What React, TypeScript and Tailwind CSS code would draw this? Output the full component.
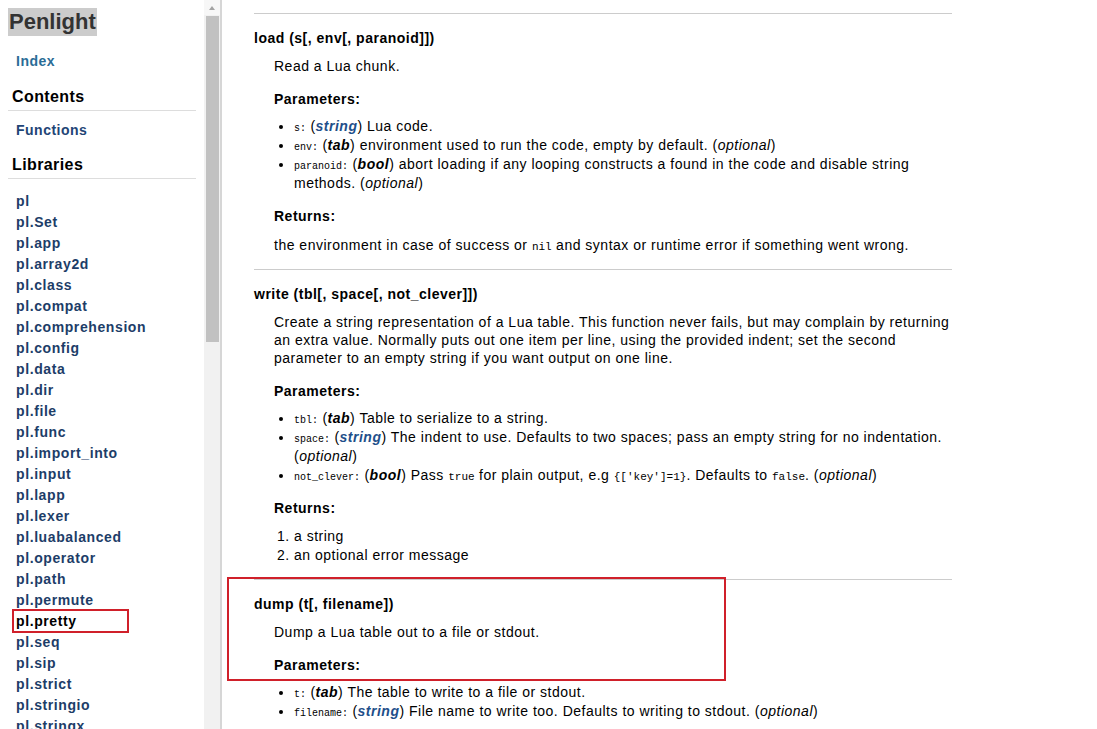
const libs = [
  "pl",
  "pl.Set",
  "pl.app",
  "pl.array2d",
  "pl.class",
  "pl.compat",
  "pl.comprehension",
  "pl.config",
  "pl.data",
  "pl.dir",
  "pl.file",
  "pl.func",
  "pl.import_into",
  "pl.input",
  "pl.lapp",
  "pl.lexer",
  "pl.luabalanced",
  "pl.operator",
  "pl.path",
  "pl.permute",
  "pl.pretty",
  "pl.seq",
  "pl.sip",
  "pl.strict",
  "pl.stringio",
  "pl.stringx",
];

const Code = ({ children }: { children: React.ReactNode }) => (
  <code className="font-['Liberation_Mono',monospace] text-[10px] leading-none tracking-normal">
    {children}
  </code>
);

const Inline = ({ children }: { children: React.ReactNode }) => (
  <code className="font-['Liberation_Mono',monospace] text-[11px] leading-none tracking-normal">
    {children}
  </code>
);

const Type = ({ name, link }: { name: string; link?: boolean }) => (
  <>
    (
    <span
      className={
        "font-bold italic " + (link ? "text-[#1e4f8a]" : "text-black")
      }
    >
      {name}
    </span>
    )
  </>
);

const Opt = () => (
  <>
    (<em>optional</em>)
  </>
);

const Sidebar = () => (
  <nav className="w-[204px] shrink-0 bg-white relative">
    <h1 className="ml-[8px] mt-[8px] inline-block h-[28px] leading-[28px] px-[1px] bg-[#cccccc] text-[#333] text-[22px] font-bold">
      Penlight
    </h1>
    <div className="mt-[15px] pl-[16px] leading-[21px] text-[14px] font-bold tracking-[0.5px] text-[#2a6c96]">
      Index
    </div>
    <h2 className="mt-[15px] mx-[8px] pl-[4px] pb-[3px] leading-[20px] text-[16px] font-bold tracking-[0.4px] text-black border-b border-[#dddddd]">
      Contents
    </h2>
    <div className="mt-[9px] pl-[16px] leading-[21px] text-[14px] font-bold tracking-[0.5px] text-[#1f4576]">
      Functions
    </div>
    <h2 className="mt-[14px] mx-[8px] pl-[4px] pb-[3px] leading-[20px] text-[16px] font-bold tracking-[0.4px] text-black border-b border-[#dddddd]">
      Libraries
    </h2>
    <ul className="mt-[12px]">
      {libs.map((l) => (
        <li
          key={l}
          className={
            "relative pl-[16px] leading-[21px] text-[14px] font-bold tracking-[0.6px] " +
            (l === "pl.pretty" ? "text-black" : "text-[#1d3d68]")
          }
        >
          {l}
          {l === "pl.pretty" && (
            <span className="absolute left-[12px] top-[-2px] w-[117px] h-[24px] border-2 border-[#d0202a]" />
          )}
        </li>
      ))}
    </ul>
  </nav>
);

const Scrollbar = () => (
  <div className="w-[16px] shrink-0 bg-[#f1f1f1] flex flex-col items-center">
    <div className="h-[15px] w-full bg-[#f7f7f7] flex items-center justify-center">
      <div className="w-0 h-0 border-l-[3px] border-r-[3px] border-b-[4px] border-l-transparent border-r-transparent border-b-[#a3a3a3]" />
    </div>
    <div className="mt-[1px] w-[13px] h-[326px] bg-[#c1c1c1]" />
  </div>
);

const Main = () => (
  <main className="flex-1 border-l-2 border-[#d6d6d6] text-[14px] tracking-[0.5px] text-black">
    <div className="ml-[32px] w-[698px] pt-[13px]">
      <hr className="border-[#cccccc]" />
      <h3 className="mt-[15px] leading-[18px] font-bold">
        load (s[, env[, paranoid]])
      </h3>
      <div className="ml-[20px]">
        <p className="mt-[10px] leading-[18px]">Read a Lua chunk.</p>
        <h4 className="mt-[15px] leading-[18px] font-bold">Parameters:</h4>
        <ul className="mt-[9px] pl-[20px] list-disc leading-[19px]">
          <li>
            <Code>s:</Code> <Type name="string" link /> Lua code.
          </li>
          <li>
            <Code>env:</Code> <Type name="tab" /> environment used to run the
            code, empty by default. <Opt />
          </li>
          <li className="whitespace-nowrap">
            <Code>paranoid:</Code> <Type name="bool" /> abort loading if any
            looping constructs a found in the code and disable string
            <br />
            methods. <Opt />
          </li>
        </ul>
        <h4 className="mt-[14px] leading-[18px] font-bold">Returns:</h4>
        <p className="mt-[11px] leading-[18px] whitespace-nowrap">
          the environment in case of success or <Inline>nil</Inline> and
          syntax or runtime error if something went wrong.
        </p>
      </div>
      <hr className="mt-[15px] border-[#cccccc]" />

      <h3 className="mt-[15px] leading-[18px] font-bold">
        write (tbl[, space[, not_clever]])
      </h3>
      <div className="ml-[20px]">
        <p className="mt-[10px] leading-[18px] whitespace-nowrap">
          Create a string representation of a Lua table. This function never
          fails, but may complain by returning
          <br />
          an extra value. Normally puts out one item per line, using the
          provided indent; set the second
          <br />
          parameter to an empty string if you want output on one line.
        </p>
        <h4 className="mt-[15px] leading-[18px] font-bold">Parameters:</h4>
        <ul className="mt-[9px] pl-[20px] list-disc leading-[19px] whitespace-nowrap">
          <li>
            <Code>tbl:</Code> <Type name="tab" /> Table to serialize to a
            string.
          </li>
          <li>
            <Code>space:</Code> <Type name="string" link /> The indent to use.
            Defaults to two spaces; pass an empty string for no indentation.
            <br />
            <Opt />
          </li>
          <li>
            <Code>not_clever:</Code> <Type name="bool" /> Pass{" "}
            <Inline>true</Inline> for plain output, e.g{" "}
            <Inline>{"{['key']=1}"}</Inline>. Defaults to{" "}
            <Inline>false</Inline>. <Opt />
          </li>
        </ul>
        <h4 className="mt-[14px] leading-[18px] font-bold">Returns:</h4>
        <ol className="mt-[10px] pl-[20px] list-decimal leading-[19px]">
          <li>a string</li>
          <li>an optional error message</li>
        </ol>
      </div>
      <div className="relative mt-[14px]">
        <hr className="border-[#cccccc]" />
        <span className="absolute left-[-27px] top-[-2px] w-[499px] h-[104px] border-2 border-[#d0202a]" />
        <h3 className="mt-[15px] leading-[18px] font-bold">
          dump (t[, filename])
        </h3>
        <div className="ml-[20px]">
          <p className="mt-[10px] leading-[18px]">
            Dump a Lua table out to a file or stdout.
          </p>
          <h4 className="mt-[15px] leading-[18px] font-bold">Parameters:</h4>
          <ul className="mt-[9px] pl-[20px] list-disc leading-[19px] whitespace-nowrap">
            <li>
              <Code>t:</Code> <Type name="tab" /> The table to write to a file
              or stdout.
            </li>
            <li>
              <Code>filename:</Code> <Type name="string" link /> File name to
              write too. Defaults to writing to stdout. <Opt />
            </li>
          </ul>
        </div>
      </div>
    </div>
  </main>
);

export default function App() {
  return (
    <div className="h-[729px] overflow-hidden flex bg-white font-['Liberation_Sans',Arial,sans-serif]">
      <Sidebar />
      <Scrollbar />
      <Main />
    </div>
  );
}
